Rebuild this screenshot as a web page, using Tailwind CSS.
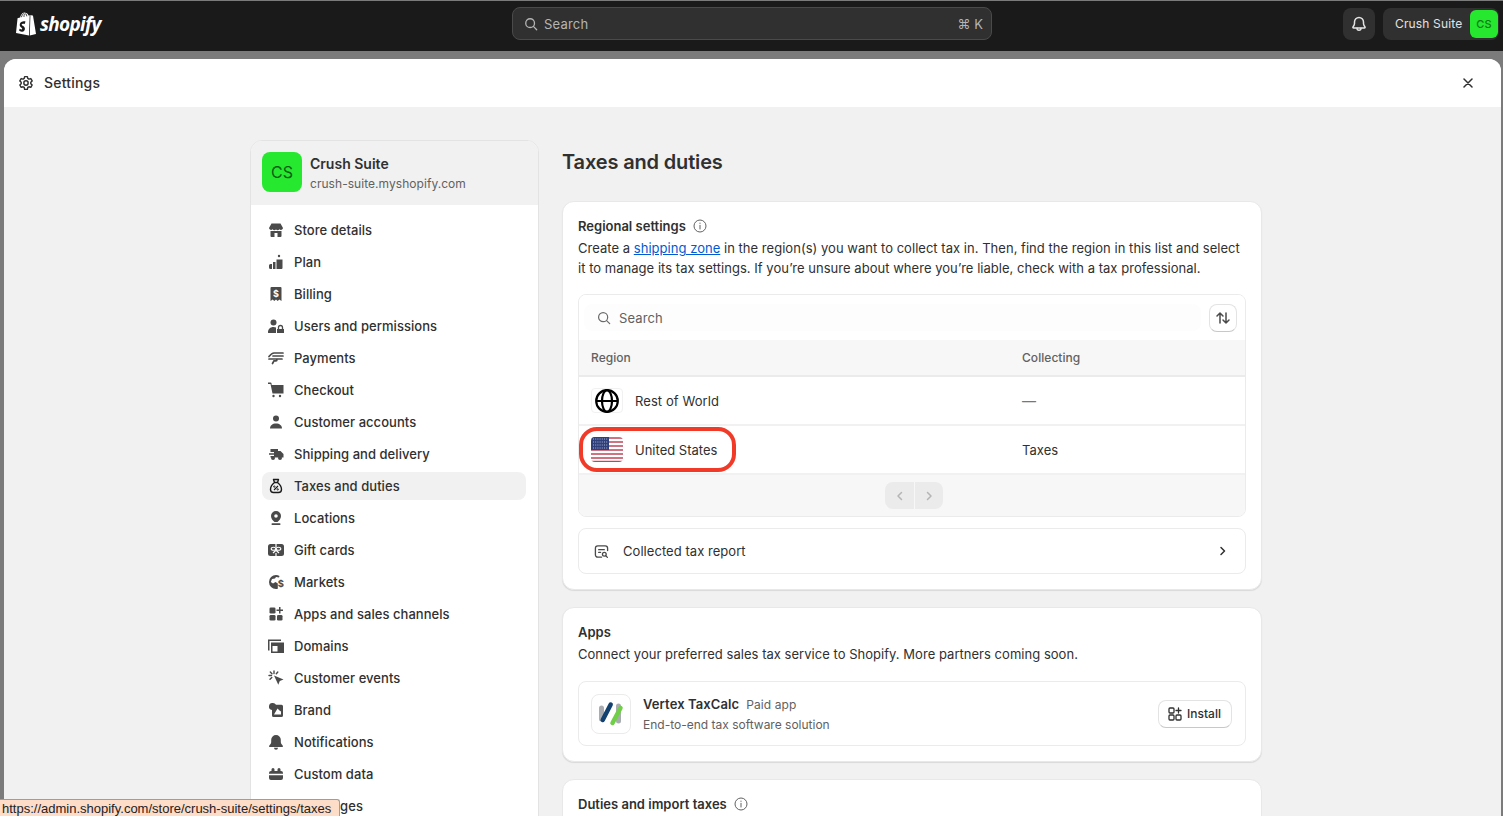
<!DOCTYPE html>
<html lang="en">
<head>
<meta charset="UTF-8">
<title>Taxes and duties</title>
<script src="https://cdn.jsdelivr.net/npm/@tailwindcss/browser@4"></script>
</head>
<body class="h-[816px] overflow-hidden bg-[#7b7b7b] font-['Inter',sans-serif] text-[13px] leading-5 text-[#303030]">
<!-- top bar -->
<header class="h-[50px] mt-px bg-[#1a1a1a] flex items-center relative pl-4 pr-[4px] pb-[5px]">
  <div class="flex items-center w-[496px]">
    <svg class="w-5 h-6" viewBox="0 0 20 24"><path fill="#fff" d="M13.600 3.200 12.500 3.500C12 2 11.200 1 10 1 9.900 1 9.800 1 9.700 1 9.300 .5 8.900.4 8.500.4 5.800.4 4.500 3.800 4.100 5.500L2.200 6.100C1.600 6.300 1.600 6.300 1.500 6.800L0 21 13 23.500 13.700 3.200Z"/><path fill="#fff" d="M14.400 3.100 13.800 23.500 20 22 17 3.800C16.900 3.500 16.700 3.400 16.500 3.400L15.100 3.300Z"/><path fill="#1a1a1a" d="M9.500 9.400 8.700 12C8.100 11.700 7.300 11.600 6.800 11.700 5.700 11.800 5.700 12.500 5.700 12.700 5.800 13.700 8.700 14 8.900 16.400 9 18.300 7.900 19.600 6.200 19.700 4.200 19.800 3.100 18.600 3.100 18.600L3.600 16.700C3.600 16.700 4.700 17.500 5.500 17.400 6 17.400 6.200 17 6.200 16.700 6.100 15.300 3.900 15.400 3.700 13.200 3.600 11.300 4.900 9.400 7.600 9.200 8.700 9.200 9.500 9.400 9.500 9.400Z"/><path fill="none" stroke="#1a1a1a" stroke-width=".8" d="M5.400 5.200C5.800 3.500 6.800 1.600 8.400 1.300M8 5 8 4.200C8 3 8.500 2.300 9.700 1.700M10.800 4.300C10.700 3.200 10.400 2.300 10 1.900"/></svg>
    <span class="ml-1 font-['Open_Sans',sans-serif] font-bold italic text-[19px] leading-6 tracking-[-0.7px] text-white">shopify</span>
  </div>
  <div class="w-[480px] h-[33px] rounded-lg bg-[#303030] border border-[#4a4a4a] flex items-center pl-[11px] pr-2 text-[#b5b5b5]">
    <svg class="w-[14px] h-[14px]" viewBox="0 0 16 16" fill="none" stroke="#b5b5b5" stroke-width="1.500"><circle cx="7" cy="7" r="5"/><path d="m11 11 3.500 3.500" stroke-linecap="round"/></svg>
    <span class="ml-[6px] tracking-[0.2px]">Search</span>
    <span class="ml-auto">⌘ K</span>
  </div>
  <div class="ml-auto flex items-center gap-2">
    <div class="w-8 h-8 rounded-lg bg-[#303030] flex items-center justify-center">
      <svg class="w-5 h-5" viewBox="0 0 20 20" fill="none" stroke="#e3e3e3" stroke-width="1.500" stroke-linejoin="round"><path d="M10 3.500A4.500 4.500 0 0 0 5.500 8v1.500c0 1.500-.8 2.500-1.500 3.500-.3.500 0 1 .5 1h11c.5 0 .8-.5.5-1-.7-1-1.500-2-1.500-3.500V8A4.500 4.500 0 0 0 10 3.500Z"/><path d="M8 14.200a2 2 0 0 0 4 0" stroke-linecap="round"/></svg>
    </div>
    <div class="w-[116px] h-8 rounded-lg bg-[#303030] flex items-center pl-3 pr-px justify-between text-[#e3e3e3] text-[12px] tracking-[0.15px]">
      <span class="whitespace-nowrap">Crush Suite</span>
      <span class="w-7 h-7 rounded-md bg-[#25e82f] text-[#137a19] text-[11px] font-medium flex items-center justify-center">CS</span>
    </div>
  </div>
</header>

<!-- settings modal -->
<div class="mt-2 ml-1 mr-[2px] h-[760px] rounded-t-xl bg-[#f1f1f1] overflow-hidden">
  <div class="h-12 bg-white flex items-center pl-[14px] pr-7 justify-between">
    <div class="flex items-center gap-[10px]">
      <svg class="w-4 h-4" viewBox="0 0 20 20" fill="none" stroke="#303030" stroke-width="1.800" stroke-linejoin="round"><circle cx="10" cy="10" r="2.700"/><path d="M8.300 2h3.400l.5 2.300 1.500.9 2.300-.7 1.700 2.900-1.700 1.600v1.900l1.700 1.600-1.700 2.900-2.300-.7-1.500.9-.5 2.400H8.300l-.5-2.400-1.500-.9-2.300.7-1.700-2.900L4 11V9L2.300 7.400 4 4.500l2.300.7 1.500-.9Z"/></svg>
      <span class="text-[14px] font-medium tracking-[0.2px] text-[#303030]">Settings</span>
    </div>
    <svg class="w-[10px] h-[10px]" viewBox="0 0 10 10" stroke="#303030" stroke-width="1.500" stroke-linecap="round"><path d="M1 1l8 8M9 1l-8 8"/></svg>
  </div>

  <div class="flex items-start pl-[246px] pt-[33px] gap-[23px]">
    <!-- sidebar -->
    <aside class="w-[289px] shrink-0 h-[700px] rounded-t-xl border border-[#e3e3e3] bg-white overflow-hidden">
      <div class="h-[64px] bg-[#f1f1f1] flex items-start pl-[11px] pt-[11px] gap-2">
        <span class="w-10 h-10 rounded-lg bg-[#25e82f] text-[#0f5c14] text-[16px] flex items-center justify-center">CS</span>
        <div class="mt-[2px]">
          <div class="text-[14px] font-semibold leading-5">Crush Suite</div>
          <div class="text-[12px] leading-4 text-[#616161] tracking-[0.05px] mt-[2px]">crush-suite.myshopify.com</div>
        </div>
      </div>
      <nav class="pt-[9px] pl-[11px] pr-3 font-medium tracking-[0.05px]">
        <a class="h-8 flex items-center gap-[10px] pl-[6px]"><svg class="w-[16px] h-[16px] shrink-0" viewBox="0 0 16 16" fill="#4a4a4a"><path d="M3.500 1.500h9L15 6a2 2 0 0 1-3.500 1.200 2.500 2.500 0 0 1-3.500.3 2.500 2.500 0 0 1-3.500-.3A2 2 0 0 1 1 6Z"/><path fill-rule="evenodd" d="M2.500 9h11v5a1 1 0 0 1-1 1h-9a1 1 0 0 1-1-1Zm4 2v4h3v-4Z"/></svg>Store details</a>
        <a class="h-8 flex items-center gap-[10px] pl-[6px]"><svg class="w-[16px] h-[16px] shrink-0" viewBox="0 0 16 16" fill="#4a4a4a"><circle cx="11" cy="2" r="1.200"/><path d="M8.500 5.500h6V14a1 1 0 0 1-1 1h-5ZM5 8h2.500v7H5ZM1 11.500A1.500 1.500 0 0 1 2.500 10H4v5H2.500A1.500 1.500 0 0 1 1 13.500Z"/></svg>Plan</a>
        <a class="h-8 flex items-center gap-[10px] pl-[6px]"><svg class="w-[16px] h-[16px] shrink-0" viewBox="0 0 16 16" fill="#4a4a4a"><path d="M3.500 1h9a1 1 0 0 1 1 1v13l-2.200-1.400-1.600 1.400L8 13.600 6.300 15l-1.600-1.400L2.500 15V2a1 1 0 0 1 1-1Z"/><text x="8" y="10.500" text-anchor="middle" font-size="9" font-weight="700" fill="#fff" font-family="Inter">$</text></svg>Billing</a>
        <a class="h-8 flex items-center gap-[10px] pl-[6px]"><svg class="w-[16px] h-[16px] shrink-0" viewBox="0 0 16 16" fill="#4a4a4a"><circle cx="5.500" cy="4.500" r="3"/><path d="M0 14.500c0-3.300 2.200-5.500 5.500-5.500 1 0 1.800.2 2.500.5v5.500H.5a.5.5 0 0 1-.5-.5ZM9 11h7v4H9Z"/><path d="M10.500 11V9.500a2 2 0 0 1 4 0V11" fill="none" stroke="#4a4a4a" stroke-width="1.300"/></svg>Users and permissions</a>
        <a class="h-8 flex items-center gap-[10px] pl-[6px]"><svg class="w-[16px] h-[16px] shrink-0" viewBox="0 0 16 16" fill="none" stroke="#4a4a4a" stroke-width="1.700" stroke-linecap="round"><path d="M1 6.500C3 4 4 3 6 3h9M5 6h10M1 9h7c1.200 0 1.200 1.800 0 1.800H6L4.500 13.500"/><path d="M9 9h5"/></svg>Payments</a>
        <a class="h-8 flex items-center gap-[10px] pl-[6px]"><svg class="w-[16px] h-[16px] shrink-0" viewBox="0 0 16 16" fill="#4a4a4a"><path d="M0 .5h2.500a1 1 0 0 1 1 .8L3.700 3H15.500v8.500H4.500L2.500 2H0Z"/><circle cx="5.500" cy="14" r="1.200"/><circle cx="12" cy="14" r="1.200"/></svg>Checkout</a>
        <a class="h-8 flex items-center gap-[10px] pl-[6px]"><svg class="w-[16px] h-[16px] shrink-0" viewBox="0 0 16 16" fill="#4a4a4a"><circle cx="8" cy="4.500" r="3"/><path d="M2 14.500c0-3 2.500-5 6-5s6 2 6 5Z"/></svg>Customer accounts</a>
        <a class="h-8 flex items-center gap-[10px] pl-[6px]"><svg class="w-[16px] h-[16px] shrink-0" viewBox="0 0 16 16" fill="#4a4a4a"><path d="M2.500 3H10v2h2.500l3 3v3.500H2.500V10H6V8.800H1V7.300h5V6H2.500Z"/><circle cx="5" cy="12" r="2"/><circle cx="12" cy="12" r="2"/></svg>Shipping and delivery</a>
        <a class="h-[28px] my-[2px] flex items-center gap-[10px] pl-[6px] rounded-lg bg-[#f1f1f1]"><svg class="w-[16px] h-[16px] shrink-0" viewBox="0 0 16 16" fill="none" stroke="#1a1a1a" stroke-width="1.400" stroke-linejoin="round"><path d="M5.500 1.500h5L9.500 4.500h-3ZM6.500 4.500C4 6.500 2.500 9 2.500 11.500c0 2 1.300 3 3 3h5c1.700 0 3-1 3-3 0-2.500-1.500-5-4-7"/><path d="M6 12l4-4" stroke-width="1.100"/><circle cx="6.300" cy="8.600" r=".7" stroke-width=".9"/><circle cx="9.700" cy="11.400" r=".7" stroke-width=".9"/></svg>Taxes and duties</a>
        <a class="h-8 flex items-center gap-[10px] pl-[6px]"><svg class="w-[16px] h-[16px] shrink-0" viewBox="0 0 16 16" fill="#4a4a4a"><path fill-rule="evenodd" d="M8 1a5 5 0 0 1 5 5c0 2.500-1.800 4.500-3.500 6h-3C4.800 10.500 3 8.500 3 6a5 5 0 0 1 5-5Zm0 3.200a1.800 1.800 0 1 0 0 3.600 1.800 1.800 0 0 0 0-3.600Z"/><rect x="3.500" y="13.300" width="9" height="1.700" rx=".8"/></svg>Locations</a>
        <a class="h-8 flex items-center gap-[10px] pl-[6px]"><svg class="w-[16px] h-[16px] shrink-0" viewBox="0 0 16 16"><rect x="0" y="2" width="16" height="12" rx="2.500" fill="#4a4a4a"/><path d="M8 2v3M8 11v3" stroke="#fff" stroke-width="1.200"/><ellipse cx="5.500" cy="6.800" rx="2.300" ry="1.500" fill="#4a4a4a" stroke="#fff" stroke-width="1.100"/><ellipse cx="10.500" cy="6.800" rx="2.300" ry="1.500" fill="#4a4a4a" stroke="#fff" stroke-width="1.100"/><path d="M8 8.200 5 11M8 8.200l3 2.800" fill="none" stroke="#fff" stroke-width="1.200"/></svg>Gift cards</a>
        <a class="h-8 flex items-center gap-[10px] pl-[6px]"><svg class="w-[16px] h-[16px] shrink-0" viewBox="0 0 16 16" fill="#4a4a4a"><path d="M8 1a7 7 0 0 0 0 14c.7 0 1.300-.1 1.800-.3V9.500L7.500 8 5 9.500 2.800 8 4 5l3-.5L8 3l3 .5.500-1.500A7 7 0 0 0 8 1Z"/><text x="12.800" y="13" text-anchor="middle" font-size="9.500" font-weight="700" fill="#4a4a4a" font-family="Inter">$</text></svg>Markets</a>
        <a class="h-8 flex items-center gap-[10px] pl-[6px]"><svg class="w-[16px] h-[16px] shrink-0" viewBox="0 0 16 16" fill="#4a4a4a"><rect x="1.500" y="1.500" width="6" height="6" rx="1.300"/><rect x="1.500" y="9" width="6" height="5.500" rx="1.300"/><rect x="9" y="9" width="5.500" height="5.500" rx="1.300"/><path d="M11 1h1.500v2.500H15V5h-2.500v2.500H11V5H8.500V3.500H11Z"/></svg>Apps and sales channels</a>
        <a class="h-8 flex items-center gap-[10px] pl-[6px]"><svg class="w-[16px] h-[16px] shrink-0" viewBox="0 0 16 16" fill="#4a4a4a"><path d="M0 1.500h13V3H1.500v9.500H0Z"/><path fill-rule="evenodd" d="M3 4.500h13V15H3Zm1.500 3.500v5.500h5V8Z"/><path d="M10 9l5 1.800-2.200.9-.9 2.300Z"/></svg>Domains</a>
        <a class="h-8 flex items-center gap-[10px] pl-[6px]"><svg class="w-[16px] h-[16px] shrink-0" viewBox="0 0 16 16" fill="#4a4a4a"><path d="M6 5.500 15.500 9.500l-3.700 1.500-1.500 3.800Z"/><path d="M6 1v2.500M1 5.500H3.500M2.300 2 4 3.700M3.800 7.500 2 9.300M9.800 2 8.300 3.700" fill="none" stroke="#4a4a4a" stroke-width="1.400" stroke-linecap="round"/></svg>Customer events</a>
        <a class="h-8 flex items-center gap-[10px] pl-[6px]"><svg class="w-[16px] h-[16px] shrink-0" viewBox="0 0 16 16" fill="#4a4a4a"><path fill-rule="evenodd" d="M5 1a3.500 3.500 0 0 1 3 1.700h5.500a1.500 1.500 0 0 1 1.500 1.500v9.300a1.500 1.500 0 0 1-1.500 1.500h-8A1.500 1.500 0 0 1 4 13.500V8A3.500 3.500 0 0 1 5 1Zm4.500 5.500L6 12.500h7V9.500l-1.500-1Z"/></svg>Brand</a>
        <a class="h-8 flex items-center gap-[10px] pl-[6px]"><svg class="w-[16px] h-[16px] shrink-0" viewBox="0 0 16 16" fill="#4a4a4a"><path d="M8 1a4.800 4.800 0 0 0-4.800 4.800V8c0 1.500-1 2.500-2 3.700-.4.500 0 1.300.6 1.300h12.400c.6 0 1-.8.6-1.300-1-1.200-2-2.200-2-3.700V5.800A4.800 4.800 0 0 0 8 1Z"/><path d="M6 13.700h4a2 2 0 0 1-4 0Z"/></svg>Notifications</a>
        <a class="h-8 flex items-center gap-[10px] pl-[6px]"><svg class="w-[16px] h-[16px] shrink-0" viewBox="0 0 16 16" fill="#4a4a4a"><path d="M1 7a2 2 0 0 1 2-2h.5V3.500a1.500 1.500 0 0 1 3 0V5h3V3.500a1.500 1.500 0 0 1 3 0V5h.5a2 2 0 0 1 2 2v.8H1ZM1 9.200h14V12a2 2 0 0 1-2 2H3a2 2 0 0 1-2-2Z"/></svg>Custom data</a>
        <a class="h-8 flex items-center gap-[10px] pl-[6px]"><span class="w-4 h-4 shrink-0"></span>Languages</a>
      </nav>
    </aside>

    <!-- main column -->
    <main class="w-[700px] shrink-0">
      <h1 class="text-[20px] leading-6 font-semibold tracking-[-0.15px] text-[#303030] mt-[10px] mb-[27px]">Taxes and duties</h1>

      <section class="relative bg-white rounded-xl border border-[#e8e8e8] shadow-[0_1px_1px_rgba(0,0,0,0.1)] px-[15px] pt-[14px] pb-[15px]">
        <div class="flex items-center gap-[7px] font-semibold">Regional settings
          <svg class="w-[14px] h-[14px]" viewBox="0 0 14 14" fill="none" stroke="#616161" stroke-width="1"><circle cx="7" cy="7" r="6"/><path d="M7 6.300v3.700" stroke-linecap="round"/><circle cx="7" cy="4.200" r=".6" fill="#616161" stroke="none"/></svg>
        </div>
        <p class="mt-[2px] tracking-[0.03px]">Create a <a class="text-[#005bd3] underline">shipping zone</a> in the region(s) you want to collect tax in. Then, find the region in this list and select it to manage its tax settings. If you’re unsure about where you’re liable, check with a tax professional.</p>

        <div class="mt-4 rounded-lg border border-[#ebebeb] overflow-hidden">
          <div class="h-[45px] flex items-center pl-[5px] pr-2 gap-2 bg-white">
            <div class="flex-1 h-[27px] rounded-lg bg-[#fdfdfd] flex items-center pl-[13px] gap-2 text-[#616161]">
              <svg class="w-[14px] h-[14px]" viewBox="0 0 16 16" fill="none" stroke="#6b6b6b" stroke-width="1.400"><circle cx="7" cy="7" r="5.200"/><path d="m11 11 3.500 3.500" stroke-linecap="round"/></svg>
              <span class="tracking-[0.1px]">Search</span>
            </div>
            <div class="w-7 h-7 rounded-lg bg-white border border-[#e3e3e3] border-b-[#c8c8c8] flex items-center justify-center">
              <svg class="w-4 h-4" viewBox="0 0 16 16" fill="none" stroke="#4a4a4a" stroke-width="1.500" stroke-linecap="round" stroke-linejoin="round"><path d="M5 13V3M2 6l3-3 3 3M11 3v10M8 10l3 3 3-3"/></svg>
            </div>
          </div>
          <div class="h-[37px] bg-[#f7f7f7] border-b-2 border-[#ebebeb] grid grid-cols-[431px_1fr] items-center pl-3 text-[12px] font-medium text-[#616161] tracking-[0.05px]">
            <span>Region</span><span>Collecting</span>
          </div>
          <div class="h-[49px] border-b-2 border-[#f1f1f1] grid grid-cols-[431px_1fr] items-center pl-3">
            <div class="flex items-center gap-3">
              <span class="w-8 h-[25px] rounded border border-[#f1f1f1] flex items-center justify-center">
                <svg class="w-[24px] h-[24px]" viewBox="0 0 24 24" fill="none" stroke="#000" stroke-width="2.200"><circle cx="12" cy="12" r="10.800"/><ellipse cx="12" cy="12" rx="5" ry="10.800"/><path d="M1 12h22"/></svg>
              </span>
              <span class="tracking-[0.08px]">Rest of World</span>
            </div>
            <span class="text-[#777] text-[14px]">—</span>
          </div>
          <div class="h-[49px] border-b-2 border-[#f1f1f1] grid grid-cols-[431px_1fr] items-center pl-3">
            <div class="flex items-center gap-3">
              <svg class="w-8 h-[25px] rounded" viewBox="0 0 32 25"><rect width="32" height="25" fill="#fff"/><path d="M0 1h32M0 5h32M0 9h32M0 13h32M0 17h32M0 21h32M0 24.500h32" stroke="#c0455a" stroke-width="1.600"/><rect width="18" height="13" fill="#2f3f7a"/><path d="M2 2h15M2 5h15M2 8h15M2 11h15" stroke="#aab2d0" stroke-width="1" stroke-dasharray="1 1.200"/></svg>
              <span>United States</span>
            </div>
            <span class="tracking-[0.05px]">Taxes</span>
          </div>
          <div class="h-[41px] bg-[#f7f7f7] flex items-center justify-center pl-[4px]">
            <div class="flex gap-px">
              <span class="w-[29px] h-[27px] rounded-l-lg bg-[#ebebeb] flex items-center justify-center"><svg class="w-[10px] h-[10px]" viewBox="0 0 10 10" fill="none" stroke="#b5b5b5" stroke-width="1.500" stroke-linecap="round" stroke-linejoin="round"><path d="M6.500 1.500 3 5l3.500 3.500"/></svg></span>
              <span class="w-[28px] h-[27px] rounded-r-lg bg-[#ebebeb] flex items-center justify-center"><svg class="w-[10px] h-[10px]" viewBox="0 0 10 10" fill="none" stroke="#b5b5b5" stroke-width="1.500" stroke-linecap="round" stroke-linejoin="round"><path d="M3.500 1.500 7 5 3.500 8.500"/></svg></span>
            </div>
          </div>
        </div>

        <div class="mt-[11px] h-[46px] rounded-lg border border-[#ebebeb] flex items-center pl-[15px] pr-[17px]">
          <svg class="w-[15px] h-[15px]" viewBox="0 0 16 16" fill="none" stroke="#4a4a4a" stroke-width="1.400" stroke-linecap="round"><path d="M8 14H4a2.500 2.500 0 0 1-2.500-2.500v-7A2.500 2.500 0 0 1 4 2h8a2.500 2.500 0 0 1 2.500 2.500V7"/><path d="M5 6h6M5 9h2"/><circle cx="11" cy="11" r="2"/><path d="m12.500 12.500 1.800 1.800"/></svg>
          <span class="ml-[14px] tracking-[0.05px]">Collected tax report</span>
          <svg class="ml-auto w-[10px] h-[10px]" viewBox="0 0 10 10" fill="none" stroke="#303030" stroke-width="1.500" stroke-linecap="round" stroke-linejoin="round"><path d="M3 1.500 6.500 5 3 8.500"/></svg>
        </div>

        <!-- red annotation -->
        <div class="absolute left-[16px] top-[225px] w-[157px] h-[45px] rounded-[18px] border-[4px] border-[#f23a28]"></div>
      </section>

      <section class="mt-[17px] bg-white rounded-xl border border-[#e8e8e8] shadow-[0_1px_1px_rgba(0,0,0,0.1)] px-[15px] pt-[14px] pb-[15px]">
        <div class="font-semibold">Apps</div>
        <p class="mt-[2px] tracking-[0.03px]">Connect your preferred sales tax service to Shopify. More partners coming soon.</p>
        <div class="mt-[17px] h-[65px] rounded-lg border border-[#ebebeb] flex items-center pl-3 pr-[13px]">
          <span class="w-10 h-10 rounded-lg border border-[#ebebeb] flex items-center justify-center">
            <svg class="w-7 h-7" viewBox="0 0 28 28" fill="none" stroke-linecap="round"><path d="M4.500 8v11M21.500 6v15" stroke="#a9adb2" stroke-width="5"/><path d="M13.700 4.500 5.700 20" stroke="#12406f" stroke-width="4.500"/><path d="M23.500 8 15.500 23" stroke="#6fcf47" stroke-width="4.500"/></svg>
          </span>
          <div class="ml-3 pt-[2px]">
            <div class="flex items-baseline gap-[7px]"><span class="font-semibold tracking-[0.1px]">Vertex TaxCalc</span><span class="text-[12px] text-[#616161] tracking-[0.1px]">Paid app</span></div>
            <div class="text-[12px] text-[#616161]">End-to-end tax software solution</div>
          </div>
          <div class="ml-auto h-7 w-[74px] pl-2 rounded-lg bg-white border border-[#e3e3e3] border-b-[#c8c8c8] flex items-center gap-1 text-[12px] font-medium">
            <svg class="w-4 h-4" viewBox="0 0 16 16" fill="none" stroke="#303030" stroke-width="1.300" stroke-linecap="round"><rect x="2" y="2" width="5" height="5" rx="1"/><rect x="2" y="9" width="5" height="5" rx="1"/><rect x="9" y="9" width="5" height="5" rx="1"/><path d="M11.500 2v5M9 4.500h5"/></svg>
            Install
          </div>
        </div>
      </section>

      <section class="mt-[17px] h-[80px] bg-white rounded-t-xl border border-[#e8e8e8] px-[15px] pt-[14px]">
        <div class="flex items-center gap-[7px] font-semibold">Duties and import taxes
          <svg class="w-[14px] h-[14px]" viewBox="0 0 14 14" fill="none" stroke="#616161" stroke-width="1"><circle cx="7" cy="7" r="6"/><path d="M7 6.300v3.700" stroke-linecap="round"/><circle cx="7" cy="4.200" r=".6" fill="#616161" stroke="none"/></svg>
        </div>
      </section>
    </main>
  </div>
</div>

<!-- browser status bubble -->
<div class="absolute left-0 bottom-0 w-[340px] h-[17px] bg-[#fddcc8] border-t border-r border-[#a89a90] rounded-tr-[3px] pl-[2px] text-[13px] leading-[17px] font-['Liberation_Sans',sans-serif] text-[#222] whitespace-nowrap overflow-hidden">https://admin.shopify.com/store/crush-suite/settings/taxes</div>
</body>
</html>
